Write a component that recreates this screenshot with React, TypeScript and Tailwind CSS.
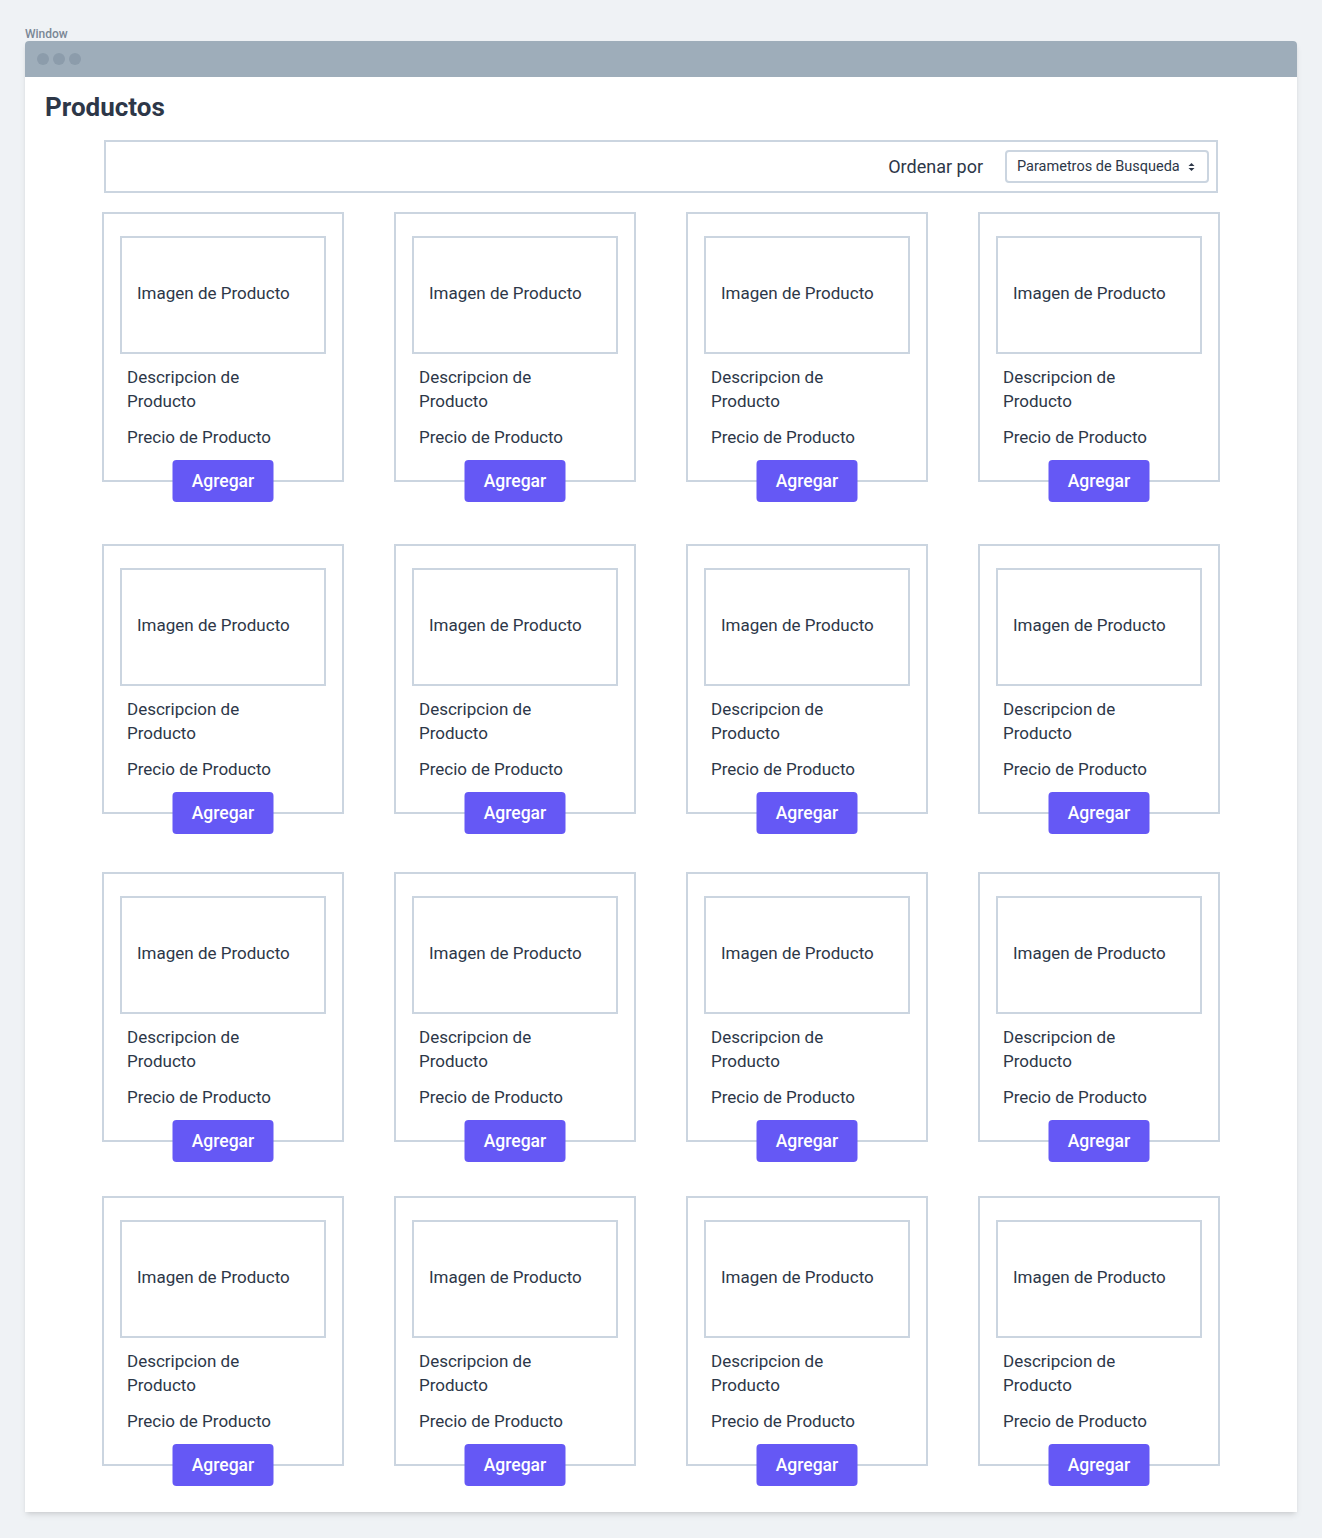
import React from "react";

const rows = [
  { key: 1, gap: "mt-[19px]" },
  { key: 2, gap: "mt-[62px]" },
  { key: 3, gap: "mt-[58px]" },
  { key: 4, gap: "mt-[54px]" },
];

function ProductCard() {
  return (
    <div className="relative h-[270px] w-[242px] border-2 border-[#cbd5e0] px-4 pt-[22px]">
      <div className="flex h-[118px] items-center border-2 border-[#cbd5e0] px-[15px] pb-[2px] text-[17px]">
        Imagen de Producto
      </div>
      <p className="mt-[11px] max-w-[180px] px-[7px] text-[17px] leading-6">
        Descripcion de Producto
      </p>
      <p className="mt-[12px] px-[7px] text-[17px] leading-6">Precio de Producto</p>
      <button className="absolute bottom-[-22px] left-1/2 h-[42px] w-[101px] -translate-x-1/2 rounded bg-[#6558f5] text-[17.5px] font-medium text-white">
        Agregar
      </button>
    </div>
  );
}

export default function App() {
  return (
    <div
      className="min-h-screen bg-[#eff2f5] px-[25px] pb-[26px] pt-[27px] text-[#2d3748]"
      style={{ fontFamily: "Roboto, 'Noto Sans', sans-serif" }}
    >
      <div className="h-[14px] text-[12px] font-medium leading-[14px] text-[#7a8796]">Window</div>
      <div className="overflow-hidden rounded-t bg-white shadow-md">
        <div className="flex h-[36px] items-center gap-[4px] bg-[#9eadba] pl-[12px]">
          <span className="h-[12px] w-[12px] rounded-full bg-[#8c9cab]" />
          <span className="h-[12px] w-[12px] rounded-full bg-[#8c9cab]" />
          <span className="h-[12px] w-[12px] rounded-full bg-[#8c9cab]" />
        </div>
        <div className="px-[20px] pb-[46px] pt-[14px]">
          <h1 className="text-[26px] font-bold leading-8 text-[#2d3748]">Productos</h1>
          <div className="mx-[59px] mt-[17px] flex h-[53px] items-center justify-end gap-[22px] border-2 border-[#cbd5e0] pr-[7px]">
            <span className="text-[18px]">Ordenar por</span>
            <div className="flex h-[33px] w-[204px] items-center justify-between rounded-sm border-2 border-[#cbd5e0] pl-[10px] pr-[12px] text-[14.5px]">
              <span>Parametros de Busqueda</span>
              <svg width="7" height="10" viewBox="0 0 7 10" fill="#2d3748">
                <path d="M3.5 1 L6.5 4 L0.5 4 Z" />
                <path d="M3.5 9 L6.5 6 L0.5 6 Z" />
              </svg>
            </div>
          </div>
          <div className="px-[57px]">
            {rows.map((row) => (
              <div key={row.key} className={`${row.gap} grid grid-cols-4 gap-[50px]`}>
                <ProductCard />
                <ProductCard />
                <ProductCard />
                <ProductCard />
              </div>
            ))}
          </div>
        </div>
      </div>
    </div>
  );
}
